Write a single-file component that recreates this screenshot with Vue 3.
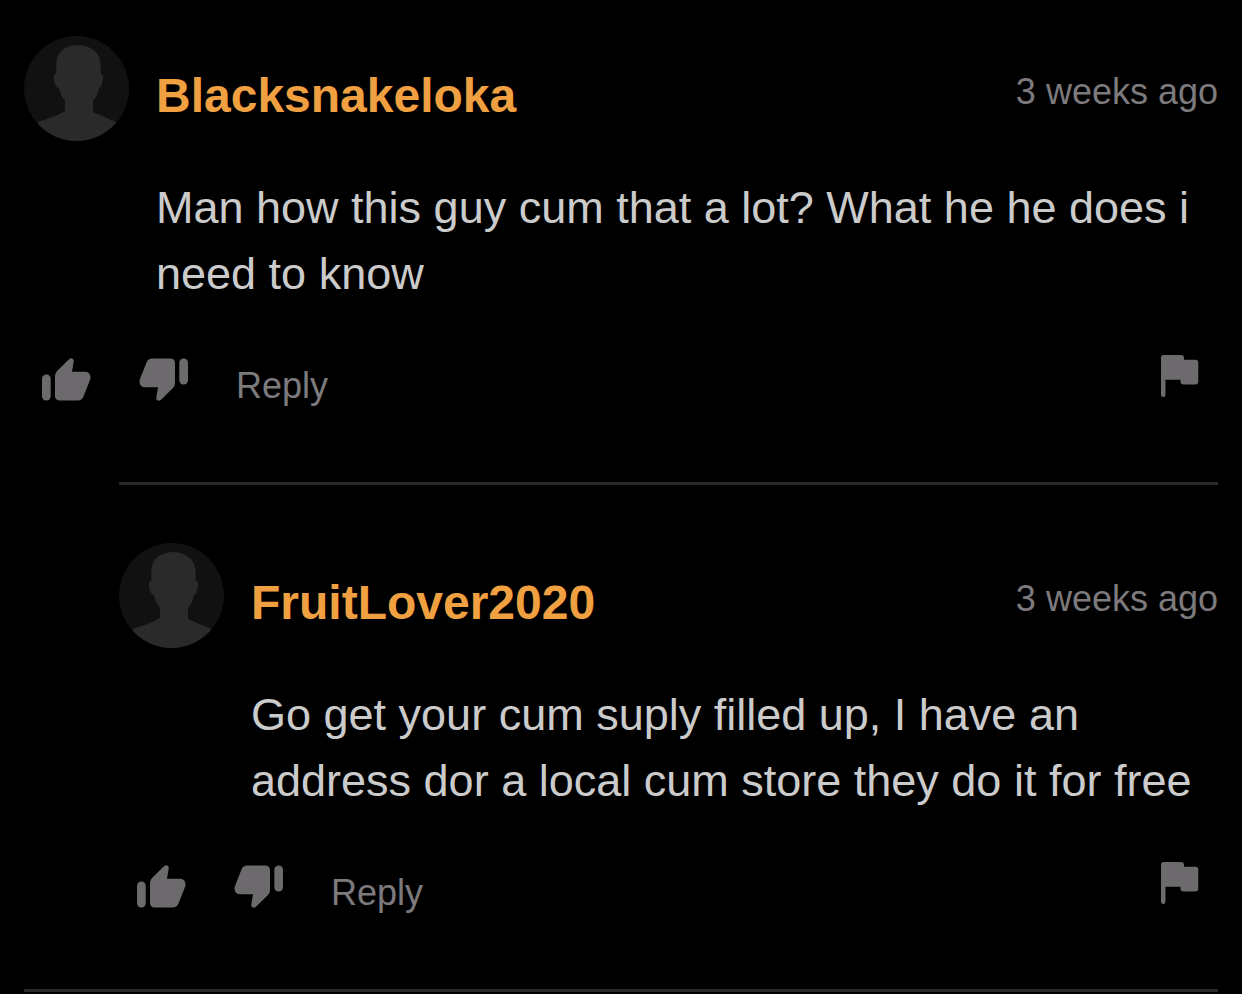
<template>
    <main class="comments">
        <article
            v-for="item in comments"
            :key="item.name"
            :class="['comment', { comment_reply: item.isReply }]"
        >
            <header class="comment_header">
                <svg class="avatar" viewBox="0 0 105 105" aria-hidden="true">
                    <defs>
                        <clipPath :id="`clip_${item.name}`">
                            <circle cx="52.5" cy="52.5" r="52.5"/>
                        </clipPath>
                    </defs>
                    <circle class="avatar_back" cx="52.5" cy="52.5" r="52.5"/>
                    <path
                        class="avatar_person"
                        :clip-path="`url(#clip_${item.name})`"
                        d="M54 9C64 9 72 14 75 21C77 26 77 31 76.500 37C80 39 79.500 44 77.500 49C76.500 52 75 52 74.500 53C74 58 72 61 69 65V76L92 86V105H14V86C22 83 33 80 41 75V65C38 61 36 57 35 52C32 52 31 48 30 44C29.500 41 30 38 32.500 37C32 29 32 23 35 18C39 12 46 9 54 9Z"
                    />
                </svg>
                <a class="comment_name" href="#">{{item.name}}</a>
                <time class="comment_time">{{item.time}}</time>
            </header>
            <p class="comment_text">{{item.text}}</p>
            <div class="comment_action">
                <button class="action_button action_thumb" type="button" aria-label="Like">
                    <svg class="icon_thumb" viewBox="0 0 49 43">
                        <rect x="0" y="16.5" width="8.700" height="26" rx="4.200"/>
                        <path :d="thumbPath"/>
                    </svg>
                </button>
                <button class="action_button action_thumb" type="button" aria-label="Dislike">
                    <svg class="icon_thumb icon_down" viewBox="0 0 49 43">
                        <rect x="0" y="16.5" width="8.700" height="26" rx="4.200"/>
                        <path :d="thumbPath"/>
                    </svg>
                </button>
                <button class="action_button action_reply" type="button">Reply</button>
                <button class="action_button action_flag" type="button" aria-label="Report">
                    <svg class="icon_flag" viewBox="0 0 38 42">
                        <path d="M2.500 0H20Q23 0 23 3V4.800H34.500Q37.300 4.800 37.300 7.600V26.500Q37.300 29.500 34.500 29.500H22.500Q19.500 29.500 19.500 26.500V24.700H4.500V39.500Q4.500 42 2.200 42Q0 42 0 39.500V2.500Q0 0 2.500 0Z"/>
                    </svg>
                </button>
            </div>
        </article>
    </main>
</template>

<script setup>
import {ref} from "vue";

const thumbPath = "M13 18Q13 15 15 13L27 1.300Q28.700 -0.300 30.600 0.700Q32 1.600 31.700 3.500L30 13.700H42.500Q48.500 13.700 48.500 19.500Q48.500 21 47.800 22.500L41.500 38.500Q39.800 42.500 36 42.500H18Q13 42.500 13 37.500Z";

const comments = ref([
    {
        name:"Blacksnakeloka",
        time:"3 weeks ago",
        text:"Man how this guy cum that a lot? What he he does i need to know",
        isReply:false
    },
    {
        name:"FruitLover2020",
        time:"3 weeks ago",
        text:"Go get your cum suply filled up, I have an address dor a local cum store they do it for free",
        isReply:true
    }
])
</script>

<style>
body{
    margin: 0;
    background: #000000;
}
</style>

<style scoped>
.comments{
    margin: 0 24px;
    padding-top: 36px;
    border-bottom: solid 3px #2a2a2b;
    font-family: "Liberation Sans", Arial, sans-serif;
}

.comment{
    padding-bottom: 76px;
}

.comment_reply{
    margin-left: 95px;
    padding-top: 58px;
    border-top: solid 3px #2a2a2b;
}

.comment_header{
    display: flex;
    align-items: center;
}

.avatar{
    flex: none;
    width: 105px;
    height: 105px;
    margin-right: 27px;
}

.avatar_back{
    fill: #111112;
}

.avatar_person{
    fill: #2a2a2a;
}

.comment_name{
    padding-top: 14px;
    color: #f0a040;
    font-size: 48px;
    font-weight: bold;
    line-height: 56px;
    text-decoration: none;
}

.comment_time{
    margin-left: auto;
    padding-top: 6px;
    color: #7c7a7c;
    font-size: 36px;
    line-height: 40px;
}

.comment_text{
    margin: 34px 0 48px 132px;
    color: #cbcbcb;
    font-size: 45px;
    line-height: 66px;
}

.comment_action{
    display: flex;
    align-items: flex-start;
    gap: 48px;
    padding: 0 19px 0 18px;
}

.action_button{
    padding: 0;
    border: none;
    background: none;
    color: #7c7a7c;
    font-family: inherit;
    font-size: 36px;
    line-height: 40px;
    cursor: pointer;
}

.action_button svg{
    display: block;
    fill: #6c6a6c;
}

.action_thumb{
    padding-top: 3px;
}

.action_reply{
    padding-top: 11px;
}

.action_flag{
    margin-left: auto;
}

.icon_thumb{
    width: 49px;
    height: 43px;
}

.icon_down{
    transform: rotate(180deg);
}

.icon_flag{
    width: 38px;
    height: 42px;
}
</style>
